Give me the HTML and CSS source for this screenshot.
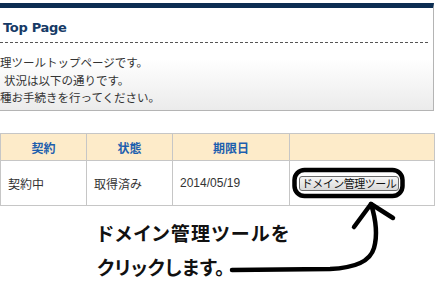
FILE: index.html
```html
<!DOCTYPE html>
<html lang="ja">
  <head>
    <meta charset="UTF-8" />
    <title>Top Page</title>
    <link rel="stylesheet" href="styles.css">
  </head>
  <body>
    <div class="page">
      <div class="panel">
        <h1>Top Page</h1>
        <div class="intro">
          <p>理ツールトップページです。</p>
          <p class="indent">状況は以下の通りです。</p>
          <p>種お手続きを行ってください。</p>
        </div>
      </div>

      <table class="contracts">
        <tr>
          <th class="col-1">契約</th>
          <th class="col-2">状態</th>
          <th class="col-3">期限日</th>
          <th></th>
        </tr>
        <tr>
          <td>契約中</td>
          <td>取得済み</td>
          <td class="date">2014/05/19</td>
          <td class="action"><button class="tool-button">ドメイン管理ツール</button></td>
        </tr>
      </table>

      <p class="note">ドメイン管理ツールを<br><span class="note-tight">クリックします。</span></p>

      <!-- 手書きの注釈 -->
      <svg class="markup" width="440" height="281" viewBox="0 0 440 281">
        <rect x="294.5" y="170" width="108" height="26" rx="10" ry="10" />
        <path d="M232 270 L330 269 C355 268 370 262 374 248 C378 234 376 220 371 204" />
        <path d="M354 227 L371 204 L393 218" />
      </svg>
    </div>
  </body>
</html>
```

FILE: styles.css
```css
body {
  margin: 0;
  background: #fff;
  color: #333;
  font-family: "Liberation Sans", "Noto Sans CJK JP", sans-serif;
}
.page {
  position: relative;
  width: 440px;
  height: 281px;
  overflow: hidden;
}
.panel {
  margin-top: 3px;
  width: 433px;
  height: 102px;
  border-top: 5px solid #0c2d52;
  border-right: 1px solid #b4b4b4;
  border-bottom: 1px solid #b4b4b4;
  background: linear-gradient(#fff 0%, #fff 50%, #ebebeb 100%);
}
.panel h1 {
  margin: 0 5px 0 0;
  padding: 12px 0 6px 3px;
  height: 16px;
  font-family: "DejaVu Sans", Verdana, sans-serif;
  font-size: 13px;
  font-weight: bold;
  color: #163a66;
  letter-spacing: -0.3px;
  border-bottom: 1px dashed #555;
}
.intro {
  padding-top: 11px;
  font-family: "Noto Sans CJK JP", sans-serif;
  font-size: 11.5px;
  line-height: 17.5px;
  color: #333;
}
.intro p {
  margin: 0;
  white-space: nowrap;
}
.intro .indent {
  padding-left: 4px;
}
.contracts {
  margin-top: 22px;
  width: 435px;
  border-collapse: collapse;
  font-size: 12px;
}
.contracts th,
.contracts td {
  border: 1px solid #c6c6c6;
}
.contracts th {
  height: 26px;
  padding: 0;
  background: #fdebc9;
  color: #1d5fae;
  font-weight: bold;
  font-family: "Noto Sans CJK JP", sans-serif;
  font-size: 12px;
}
.col-1 {
  width: 85px;
}
.col-2 {
  width: 85px;
}
.col-3 {
  width: 116px;
}
.contracts td {
  height: 44px;
  padding: 0 0 0 7px;
  color: #333;
}
.contracts td.action {
  padding-left: 9px;
}
.tool-button {
  width: 100px;
  height: 15px;
  padding: 0;
  margin: 0;
  border: 1px solid #6a6a6a;
  border-radius: 3px;
  background: linear-gradient(#f6f6f6, #d9d9d9);
  color: #111;
  font-family: "Noto Sans CJK JP", sans-serif;
  font-size: 11px;
  line-height: 13px;
  letter-spacing: -0.5px;
  white-space: nowrap;
}
.note {
  margin: 10px 0 0 97px;
  font-family: "Noto Sans CJK JP", sans-serif;
  font-feature-settings: "palt";
  font-size: 19px;
  font-weight: bold;
  line-height: 34px;
  color: #111;
  letter-spacing: 1.4px;
}
.note-tight {
  letter-spacing: 0.4px;
}
.markup {
  position: absolute;
  left: 0;
  top: 0;
  pointer-events: none;
}
.markup rect,
.markup path {
  fill: none;
  stroke: #000;
  stroke-width: 4.5;
  stroke-linecap: round;
  stroke-linejoin: round;
}
```
